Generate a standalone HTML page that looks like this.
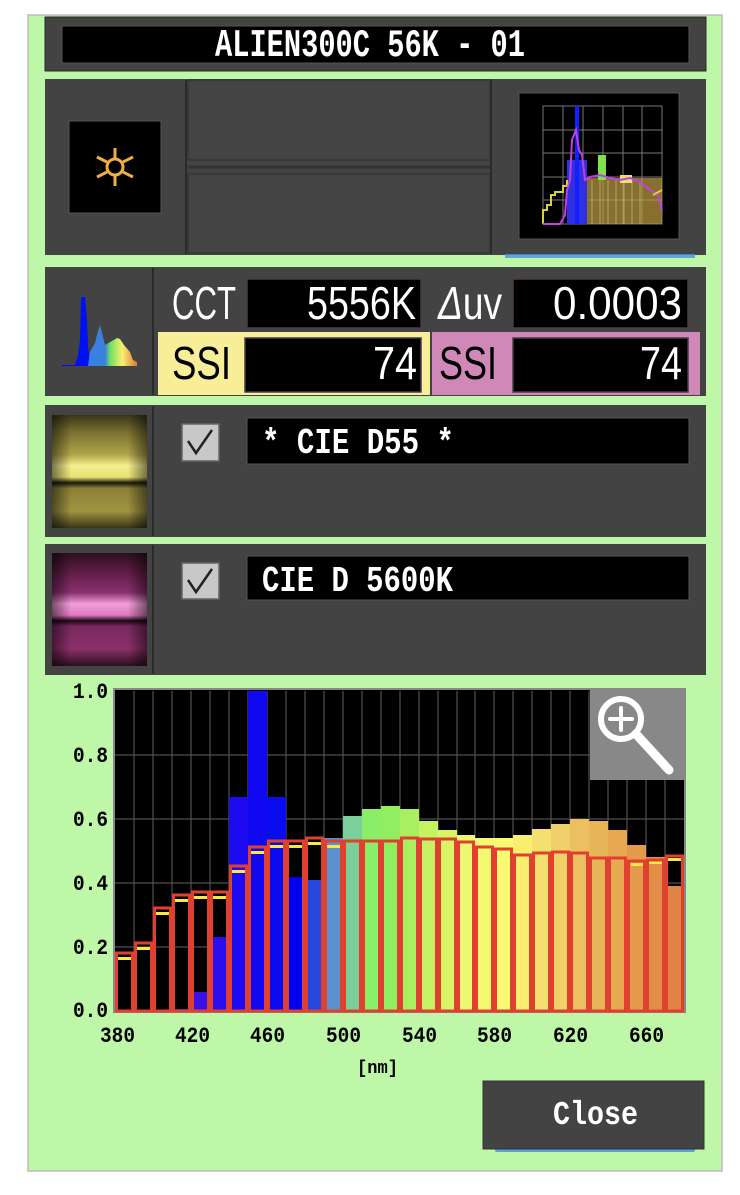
<!DOCTYPE html>
<html><head><meta charset="utf-8"><style>
html,body{margin:0;padding:0;background:#fff;width:740px;height:1195px;overflow:hidden}
svg{display:block;font-family:"Liberation Sans Narrow","Liberation Sans",sans-serif}
</style></head><body>
<svg width="740" height="1195" viewBox="0 0 740 1195" xmlns="http://www.w3.org/2000/svg">
<defs>
<linearGradient id="ky" x1="0" y1="0" x2="0" y2="1">
<stop offset="0" stop-color="#3a3618"/><stop offset="0.15" stop-color="#7a7030"/><stop offset="0.35" stop-color="#b0a448"/>
<stop offset="0.45" stop-color="#f4f090"/><stop offset="0.55" stop-color="#e8e070"/><stop offset="0.6" stop-color="#1a1808"/>
<stop offset="0.65" stop-color="#8a8038"/><stop offset="0.85" stop-color="#a09440"/><stop offset="1" stop-color="#3a3618"/></linearGradient>
<linearGradient id="kp" x1="0" y1="0" x2="0" y2="1">
<stop offset="0" stop-color="#2a1020"/><stop offset="0.15" stop-color="#5a1a40"/><stop offset="0.35" stop-color="#8a3070"/>
<stop offset="0.45" stop-color="#f0a0d8"/><stop offset="0.55" stop-color="#e078c0"/><stop offset="0.6" stop-color="#1a0810"/>
<stop offset="0.65" stop-color="#7a2860"/><stop offset="0.85" stop-color="#8a3068"/><stop offset="1" stop-color="#2a1020"/></linearGradient>
<linearGradient id="kh" x1="0" y1="0" x2="1" y2="0">
<stop offset="0" stop-color="#000" stop-opacity="0.5"/><stop offset="0.2" stop-color="#000" stop-opacity="0"/>
<stop offset="0.8" stop-color="#000" stop-opacity="0"/><stop offset="1" stop-color="#000" stop-opacity="0.5"/></linearGradient>
<linearGradient id="ic" x1="0" y1="0" x2="1" y2="0">
<stop offset="0.35" stop-color="#3a80e0"/><stop offset="0.45" stop-color="#70e060"/><stop offset="0.7" stop-color="#f8f070"/><stop offset="1" stop-color="#e07838"/></linearGradient>
</defs>
<rect x="28" y="15" width="694" height="1156" fill="#bff7a9" stroke="#bbb" stroke-width="1.5"/>
<!-- title -->
<rect x="45" y="17" width="661" height="54" fill="#434343" stroke="#2a2a2a"/>
<rect x="62" y="26" width="627" height="37" fill="#000" stroke="#555"/>
<text x="215" y="56" font-size="39" fill="#fff" textLength="310" lengthAdjust="spacingAndGlyphs" font-family="Liberation Mono, monospace" font-weight="bold">ALIEN300C 56K - 01</text>
<!-- section 2 -->
<rect x="45" y="79" width="661" height="176" fill="#434343"/>
<line x1="186" y1="80" x2="186" y2="254" stroke="#2a2a2a" stroke-width="2"/>
<line x1="491" y1="80" x2="491" y2="254" stroke="#2a2a2a" stroke-width="2"/>
<rect x="188" y="80" width="302" height="80" fill="#444" stroke="#2e2e2e"/>
<rect x="188" y="174" width="302" height="79" fill="#444" stroke="#2e2e2e"/>
<line x1="188" y1="167" x2="490" y2="167" stroke="#333" stroke-width="3"/>
<rect x="69" y="121" width="92" height="92" fill="#000" stroke="#555"/>
<g stroke="#f0b040" stroke-width="3" fill="none"><circle cx="115" cy="167" r="8"/>
<line x1="115" y1="148" x2="115" y2="158"/><line x1="115" y1="176" x2="115" y2="186"/>
<line x1="97" y1="157" x2="107" y2="162"/><line x1="123" y1="172" x2="133" y2="177"/>
<line x1="97" y1="177" x2="107" y2="172"/><line x1="123" y1="162" x2="133" y2="157"/></g>
<rect x="519" y="93" width="160" height="146" fill="#000" stroke="#555"/>
<g stroke="#777" stroke-width="1"><rect x="543" y="106" width="119" height="118" fill="none"/>
<line x1="563" y1="106" x2="563" y2="224"/><line x1="583" y1="106" x2="583" y2="224"/><line x1="603" y1="106" x2="603" y2="224"/><line x1="623" y1="106" x2="623" y2="224"/><line x1="642" y1="106" x2="642" y2="224"/>
<line x1="543" y1="130" x2="662" y2="130"/><line x1="543" y1="153" x2="662" y2="153"/><line x1="543" y1="177" x2="662" y2="177"/><line x1="543" y1="200" x2="662" y2="200"/></g>
<rect x="567" y="160" width="20" height="64" fill="#3030e0"/><rect x="575" y="106" width="4" height="118" fill="#1020ff"/>
<rect x="587" y="178" width="75" height="46" fill="#c0a040" opacity="0.7"/>
<rect x="598" y="155" width="8" height="25" fill="#80e050"/>
<rect x="620" y="175" width="12" height="8" fill="#e8e070"/>
<g stroke="#ffffff" stroke-opacity="0.35" stroke-width="1"><line x1="592" y1="180" x2="592" y2="224"/><line x1="600" y1="180" x2="600" y2="224"/><line x1="608" y1="180" x2="608" y2="224"/><line x1="616" y1="180" x2="616" y2="224"/><line x1="624" y1="180" x2="624" y2="224"/><line x1="632" y1="180" x2="632" y2="224"/><line x1="640" y1="182" x2="640" y2="224"/></g>
<polyline points="543,224 543,210 547,210 547,205 551,205 551,195 555,195 555,192 563,192 563,186 567,186 567,180" fill="none" stroke="#d8d040" stroke-width="2"/>
<polyline points="543,224 560,224 565,215 567,190 570,180 572,140 576,130 579,150 582,155 585,180 590,177 600,175 610,178 620,180 630,178 640,182 650,190 658,195 662,210" fill="none" stroke="#c040e0" stroke-width="2"/>
<line x1="653" y1="195" x2="662" y2="190" stroke="#d8d040" stroke-width="2"/>
<rect x="505" y="254" width="190" height="4" fill="#4a90e0" opacity="0.8"/>
<!-- section 3 -->
<rect x="45" y="267" width="661" height="129" fill="#434343"/>
<line x1="153" y1="268" x2="153" y2="395" stroke="#2a2a2a" stroke-width="2"/>
<path d="M62,366 L62,365 L75,365 L78,355 L80,340 L81,297 L85,297 L87,320 L88,345 L90,366 Z" fill="#0010f0"/>
<path d="M88,366 L90,352 L95,343 L97,335 L100,325 L102,333 L105,345 L112,341 L117,338 L120,339 L124,345 L130,352 L133,360 L137,362 L137,366 Z" fill="url(#ic)"/>
<rect x="158" y="332" width="272" height="63" fill="#f8ee98"/>
<rect x="432" y="332" width="268" height="63" fill="#d088b8"/>
<g fill="#000" stroke="#4a3a4a" stroke-width="1.5">
<rect x="247" y="279" width="174" height="49"/><rect x="513" y="279" width="175" height="49"/>
<rect x="245" y="338" width="176" height="54"/><rect x="513" y="338" width="175" height="54"/></g>
<g font-size="46" fill="#fff">
<text x="172" y="319" textLength="64" lengthAdjust="spacingAndGlyphs">CCT</text>
<text x="307" y="319" textLength="109" lengthAdjust="spacingAndGlyphs">5556K</text>
<text x="438" y="319" textLength="64" lengthAdjust="spacingAndGlyphs"><tspan font-style="italic">Δ</tspan>uv</text>
<text x="553" y="319" textLength="129" lengthAdjust="spacingAndGlyphs">0.0003</text>
<text x="373" y="379" textLength="44" lengthAdjust="spacingAndGlyphs">74</text>
<text x="640" y="379" textLength="42" lengthAdjust="spacingAndGlyphs">74</text>
<text x="172" y="379" textLength="59" lengthAdjust="spacingAndGlyphs" fill="#000">SSI</text>
<text x="439" y="379" textLength="58" lengthAdjust="spacingAndGlyphs" fill="#000">SSI</text></g>
<!-- section 4 -->
<rect x="45" y="405" width="661" height="132" fill="#434343"/>
<line x1="153" y1="406" x2="153" y2="536" stroke="#2a2a2a" stroke-width="2"/>
<rect x="52" y="415" width="95" height="113" fill="url(#ky)"/><rect x="52" y="415" width="95" height="113" fill="url(#kh)"/>
<rect x="182" y="424" width="37" height="37" fill="#c8c8c8" stroke="#666" stroke-width="1.5"/>
<polyline points="188,441 196,453 212,430" fill="none" stroke="#222" stroke-width="2.5"/>
<rect x="247" y="418" width="442" height="46" fill="#000" stroke="#555"/>
<text x="262" y="453" font-size="36" fill="#fff" font-family="Liberation Mono, monospace" font-weight="bold" textLength="192" lengthAdjust="spacingAndGlyphs">* CIE D55 *</text>
<!-- section 5 -->
<rect x="45" y="544" width="661" height="131" fill="#434343"/>
<line x1="153" y1="545" x2="153" y2="674" stroke="#2a2a2a" stroke-width="2"/>
<rect x="52" y="553" width="95" height="113" fill="url(#kp)"/><rect x="52" y="553" width="95" height="113" fill="url(#kh)"/>
<rect x="182" y="563" width="37" height="36" fill="#c8c8c8" stroke="#666" stroke-width="1.5"/>
<polyline points="188,580 196,592 212,569" fill="none" stroke="#222" stroke-width="2.5"/>
<rect x="247" y="556" width="442" height="44" fill="#000" stroke="#555"/>
<text x="262" y="591" font-size="36" fill="#fff" font-family="Liberation Mono, monospace" font-weight="bold" textLength="191" lengthAdjust="spacingAndGlyphs">CIE D 5600K</text>
<!-- chart -->
<rect x="114" y="689" width="571" height="323" fill="#000" stroke="#888" stroke-width="2"/>
<g stroke="#505050" stroke-width="1.2">
<line x1="134" y1="691" x2="134" y2="1011"/><line x1="153" y1="691" x2="153" y2="1011"/><line x1="172" y1="691" x2="172" y2="1011"/><line x1="191" y1="691" x2="191" y2="1011"/><line x1="210" y1="691" x2="210" y2="1011"/><line x1="229" y1="691" x2="229" y2="1011"/><line x1="248" y1="691" x2="248" y2="1011"/><line x1="267" y1="691" x2="267" y2="1011"/><line x1="286" y1="691" x2="286" y2="1011"/><line x1="305" y1="691" x2="305" y2="1011"/><line x1="324" y1="691" x2="324" y2="1011"/><line x1="343" y1="691" x2="343" y2="1011"/><line x1="362" y1="691" x2="362" y2="1011"/><line x1="381" y1="691" x2="381" y2="1011"/><line x1="400" y1="691" x2="400" y2="1011"/><line x1="419" y1="691" x2="419" y2="1011"/><line x1="438" y1="691" x2="438" y2="1011"/><line x1="457" y1="691" x2="457" y2="1011"/><line x1="475" y1="691" x2="475" y2="1011"/><line x1="494" y1="691" x2="494" y2="1011"/><line x1="513" y1="691" x2="513" y2="1011"/><line x1="532" y1="691" x2="532" y2="1011"/><line x1="551" y1="691" x2="551" y2="1011"/><line x1="570" y1="691" x2="570" y2="1011"/><line x1="589" y1="691" x2="589" y2="1011"/><line x1="608" y1="691" x2="608" y2="1011"/><line x1="627" y1="691" x2="627" y2="1011"/><line x1="646" y1="691" x2="646" y2="1011"/><line x1="665" y1="691" x2="665" y2="1011"/>
<line x1="115" y1="755" x2="684" y2="755"/><line x1="115" y1="819" x2="684" y2="819"/><line x1="115" y1="883" x2="684" y2="883"/><line x1="115" y1="947" x2="684" y2="947"/></g>
<g>
<rect x="172" y="1009" width="19" height="2" fill="#3010e0"/>
<rect x="191" y="992" width="19" height="19" fill="#3a10e8"/>
<rect x="210" y="937" width="19" height="74" fill="#2a0ef0"/>
<rect x="229" y="797" width="19" height="214" fill="#1e0af0"/>
<rect x="248" y="691" width="19" height="320" fill="#1008f0"/>
<rect x="267" y="797" width="19" height="214" fill="#0a0cf0"/>
<rect x="286" y="877" width="19" height="134" fill="#0000ee"/>
<rect x="305" y="880" width="19" height="131" fill="#2448e0"/>
<rect x="324" y="838" width="19" height="173" fill="#5a92d0"/>
<rect x="343" y="816" width="19" height="195" fill="#7ad098"/>
<rect x="362" y="809" width="19" height="202" fill="#8aee68"/>
<rect x="381" y="806" width="19" height="205" fill="#90ee60"/>
<rect x="400" y="809" width="19" height="202" fill="#a8f060"/>
<rect x="419" y="821" width="19" height="190" fill="#c4f262"/>
<rect x="438" y="830" width="19" height="181" fill="#daf468"/>
<rect x="457" y="835" width="18" height="176" fill="#ecf870"/>
<rect x="475" y="838" width="19" height="173" fill="#f6f872"/>
<rect x="494" y="838" width="19" height="173" fill="#fafa72"/>
<rect x="513" y="835" width="19" height="176" fill="#f8ee70"/>
<rect x="532" y="829" width="19" height="182" fill="#f4e070"/>
<rect x="551" y="824" width="19" height="187" fill="#f0d068"/>
<rect x="570" y="819" width="19" height="192" fill="#ecc060"/>
<rect x="589" y="821" width="19" height="190" fill="#e8b458"/>
<rect x="608" y="830" width="19" height="181" fill="#e6a850"/>
<rect x="627" y="845" width="19" height="166" fill="#e49a4c"/>
<rect x="646" y="857" width="19" height="154" fill="#e28e48"/>
<rect x="665" y="886" width="19" height="125" fill="#e08448"/>
</g>
<g fill="#f8e840">
<rect x="118" y="957" width="13" height="3"/><rect x="137" y="947" width="13" height="3"/><rect x="156" y="912" width="13" height="3"/><rect x="175" y="899" width="13" height="3"/><rect x="194" y="896" width="13" height="3"/><rect x="213" y="896" width="13" height="3"/><rect x="232" y="870" width="13" height="3"/><rect x="251" y="851" width="13" height="3"/><rect x="270" y="845" width="13" height="3"/><rect x="289" y="845" width="13" height="3"/><rect x="308" y="842" width="13" height="3"/><rect x="327" y="845" width="13" height="3"/>
<rect x="631" y="863" width="13" height="3"/><rect x="649" y="861" width="13" height="3"/><rect x="668" y="858" width="13" height="3"/></g>
<g fill="none" stroke="#e04030" stroke-width="3">
<rect x="116.5" y="953" width="16" height="58"/><rect x="135.5" y="943" width="16" height="68"/><rect x="154.5" y="908" width="16" height="103"/><rect x="173.5" y="895" width="16" height="116"/><rect x="192.5" y="892" width="16" height="119"/><rect x="211.5" y="892" width="16" height="119"/><rect x="230.5" y="866" width="16" height="145"/><rect x="249.5" y="847" width="16" height="164"/><rect x="268.5" y="841" width="16" height="170"/><rect x="287.5" y="841" width="16" height="170"/><rect x="306.5" y="838" width="16" height="173"/><rect x="325.5" y="841" width="16" height="170"/><rect x="344.5" y="841" width="16" height="170"/><rect x="363.5" y="841" width="16" height="170"/><rect x="382.5" y="841" width="16" height="170"/><rect x="401.5" y="838" width="16" height="173"/><rect x="420.5" y="839" width="16" height="172"/><rect x="439.5" y="839" width="16" height="172"/><rect x="458.5" y="842" width="15" height="169"/><rect x="476.5" y="847" width="16" height="164"/><rect x="495.5" y="849" width="16" height="162"/><rect x="514.5" y="855" width="16" height="156"/><rect x="533.5" y="853" width="16" height="158"/><rect x="552.5" y="852" width="16" height="159"/><rect x="571.5" y="853" width="16" height="158"/><rect x="590.5" y="858" width="16" height="153"/><rect x="609.5" y="858" width="16" height="153"/><rect x="628.5" y="861" width="16" height="150"/><rect x="647.5" y="860" width="16" height="151"/><rect x="666.5" y="856" width="16" height="155"/></g>
<!-- magnifier -->
<rect x="590" y="690" width="94" height="90" fill="#888"/>
<g stroke="#fff" fill="none" stroke-linecap="round"><circle cx="621" cy="719" r="20" stroke-width="6"/>
<line x1="636" y1="734" x2="669" y2="770" stroke-width="9"/>
<line x1="621" y1="708" x2="621" y2="730" stroke-width="4"/><line x1="610" y1="719" x2="632" y2="719" stroke-width="4"/></g>
<g font-size="22" font-weight="bold" fill="#000" font-family="Liberation Mono, monospace">
<text x="73" y="698" textLength="35" lengthAdjust="spacingAndGlyphs">1.0</text>
<text x="73" y="762" textLength="35" lengthAdjust="spacingAndGlyphs">0.8</text>
<text x="73" y="826" textLength="35" lengthAdjust="spacingAndGlyphs">0.6</text>
<text x="73" y="890" textLength="35" lengthAdjust="spacingAndGlyphs">0.4</text>
<text x="73" y="954" textLength="35" lengthAdjust="spacingAndGlyphs">0.2</text>
<text x="73" y="1017" textLength="35" lengthAdjust="spacingAndGlyphs">0.0</text>
<text x="100" y="1042" textLength="35" lengthAdjust="spacingAndGlyphs">380</text>
<text x="175" y="1042" textLength="35" lengthAdjust="spacingAndGlyphs">420</text>
<text x="250" y="1042" textLength="35" lengthAdjust="spacingAndGlyphs">460</text>
<text x="326" y="1042" textLength="35" lengthAdjust="spacingAndGlyphs">500</text>
<text x="402" y="1042" textLength="35" lengthAdjust="spacingAndGlyphs">540</text>
<text x="477" y="1042" textLength="35" lengthAdjust="spacingAndGlyphs">580</text>
<text x="553" y="1042" textLength="35" lengthAdjust="spacingAndGlyphs">620</text>
<text x="629" y="1042" textLength="35" lengthAdjust="spacingAndGlyphs">660</text>
<text x="357" y="1073" font-size="18" textLength="41" lengthAdjust="spacingAndGlyphs">[nm]</text></g>
<!-- close -->
<rect x="495" y="1146" width="200" height="6" rx="2" fill="#4a90e0" opacity="0.85"/>
<rect x="483" y="1081" width="221" height="68" fill="#434343" stroke="#333"/>
<text x="553" y="1124" font-size="33" font-weight="bold" fill="#fff" font-family="Liberation Mono, monospace" textLength="85" lengthAdjust="spacingAndGlyphs">Close</text>
</svg>
</body></html>
